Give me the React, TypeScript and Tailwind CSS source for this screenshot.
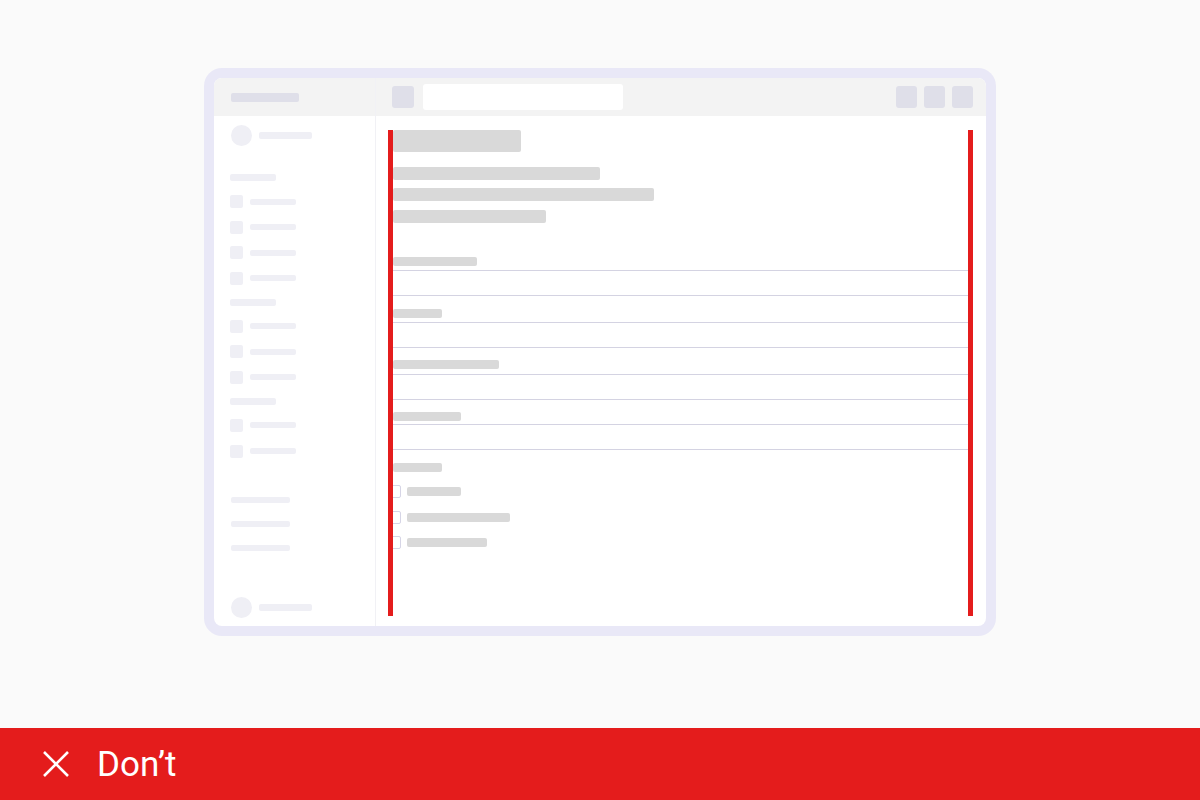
const navGroups = [
  { label: 'w-[46px]', items: 4 },
  { label: 'w-[46px]', items: 3 },
  { label: 'w-[46px]', items: 2 },
];

function Sidebar() {
  return (
    <aside className="w-[162px] shrink-0 border-r border-[#f1f1f5] flex flex-col">
      <div className="h-[38px] bg-[#f3f3f3] flex items-center pl-[17px]">
        <div className="w-[68px] h-[9px] rounded-[2px] bg-[#dfdfe9]" />
      </div>

      <div className="flex-1 flex flex-col pl-[16px] pb-[8px]">
        <div className="mt-[9px] ml-[1px] flex items-center gap-[7px]">
          <div className="w-[21px] h-[21px] rounded-full bg-[#efeff5]" />
          <div className="w-[53px] h-[7px] rounded-[2px] bg-[#efeff5]" />
        </div>

        {navGroups.map((group, gi) => (
          <div key={gi} className={gi === 0 ? 'mt-[28px]' : 'mt-[14px]'}>
            <div className={`${group.label} h-[7px] rounded-[2px] bg-[#efeff5]`} />
            <div className="mt-[14px] flex flex-col gap-[12.6px]">
              {Array.from({ length: group.items }).map((_, i) => (
                <div key={i} className="flex items-center gap-[7px]">
                  <div className="w-[13px] h-[13px] rounded-[2px] bg-[#efeff5]" />
                  <div className="w-[46px] h-[6px] rounded-[2px] bg-[#efeff5]" />
                </div>
              ))}
            </div>
          </div>
        ))}

        <div className="mt-[39px] ml-[1px] flex flex-col gap-[18px]">
          <div className="w-[59px] h-[6px] rounded-[2px] bg-[#efeff5]" />
          <div className="w-[59px] h-[6px] rounded-[2px] bg-[#efeff5]" />
          <div className="w-[59px] h-[6px] rounded-[2px] bg-[#efeff5]" />
        </div>

        <div className="mt-auto ml-[1px] flex items-center gap-[7px]">
          <div className="w-[21px] h-[21px] rounded-full bg-[#efeff5]" />
          <div className="w-[53px] h-[7px] rounded-[2px] bg-[#efeff5]" />
        </div>
      </div>
    </aside>
  );
}

function Field({ label, mt, gap }: { label: string; mt: string; gap: string }) {
  return (
    <div className={mt}>
      <div className={`${label} h-[9px] rounded-[2px] bg-[#d9d9d9]`} />
      <div className={`${gap} h-[26px] border-y border-[#d4d3e2]`} />
    </div>
  );
}

function MainPanel() {
  return (
    <main className="flex-1 flex flex-col">
      <div className="h-[38px] bg-[#f3f3f3] flex items-center pl-[16px] pr-[13px]">
        <div className="w-[22px] h-[22px] rounded-[3px] bg-[#dfdfe9]" />
        <div className="ml-[9px] w-[200px] h-[26px] rounded-[3px] bg-white" />
        <div className="ml-auto flex gap-[7px]">
          <div className="w-[21px] h-[22px] rounded-[3px] bg-[#dfdfe9]" />
          <div className="w-[21px] h-[22px] rounded-[3px] bg-[#dfdfe9]" />
          <div className="w-[21px] h-[22px] rounded-[3px] bg-[#dfdfe9]" />
        </div>
      </div>

      <div className="relative flex-1 px-[17px] pr-[18px] pt-[14px]">
        <div className="w-[128px] h-[22px] rounded-[2px] bg-[#d9d9d9]" />
        <div className="mt-[15px] w-[207px] h-[13px] rounded-[2px] bg-[#d9d9d9]" />
        <div className="mt-[8px] w-[261px] h-[13px] rounded-[2px] bg-[#d9d9d9]" />
        <div className="mt-[9px] w-[153px] h-[13px] rounded-[2px] bg-[#d9d9d9]" />

        <Field label="w-[84px]" mt="mt-[34px]" gap="mt-[4px]" />
        <Field label="w-[49px]" mt="mt-[13px]" gap="mt-[4px]" />
        <Field label="w-[106px]" mt="mt-[12px]" gap="mt-[5px]" />
        <Field label="w-[68px]" mt="mt-[12px]" gap="mt-[3px]" />

        <div className="mt-[13px] w-[49px] h-[9px] rounded-[2px] bg-[#d9d9d9]" />
        <div className="mt-[13px] -ml-[5px] flex flex-col gap-[12.5px]">
          {['w-[54px]', 'w-[103px]', 'w-[80px]'].map((w, i) => (
            <div key={i} className="flex items-center gap-[6px]">
              <div className="w-[13px] h-[13px] rounded-[2px] border border-[#d6d5e6] bg-white" />
              <div className={`${w} h-[9px] rounded-[2px] bg-[#d9d9d9]`} />
            </div>
          ))}
        </div>

        {/* annotation: content stretched edge to edge */}
        <div className="absolute left-[12px] top-[14px] bottom-[10px] w-[5px] bg-[#e41c1c]" />
        <div className="absolute right-[13px] top-[14px] bottom-[10px] w-[5px] bg-[#e41c1c]" />
      </div>
    </main>
  );
}

export default function App() {
  return (
    <div
      className="w-[1200px] h-[800px] bg-[#fafafa] flex flex-col"
      style={{ fontFamily: 'Roboto, "Liberation Sans", sans-serif' }}
    >
      <div className="h-[728px] pt-[68px]">
        <div className="mx-auto w-[792px] h-[568px] rounded-[18px] bg-[#e9e8f7] p-[10px]">
          <div className="h-full rounded-[8px] bg-white overflow-hidden flex">
            <Sidebar />
            <MainPanel />
          </div>
        </div>
      </div>

      <div className="h-[72px] bg-[#e41c1c] flex items-center pl-[43px]">
        <svg width="26" height="26" viewBox="0 0 26 26" fill="none">
          <path d="M1 1L25 25M25 1L1 25" stroke="white" strokeWidth="2.6" />
        </svg>
        <span className="ml-[28px] text-white text-[35px] leading-none">Don’t</span>
      </div>
    </div>
  );
}
